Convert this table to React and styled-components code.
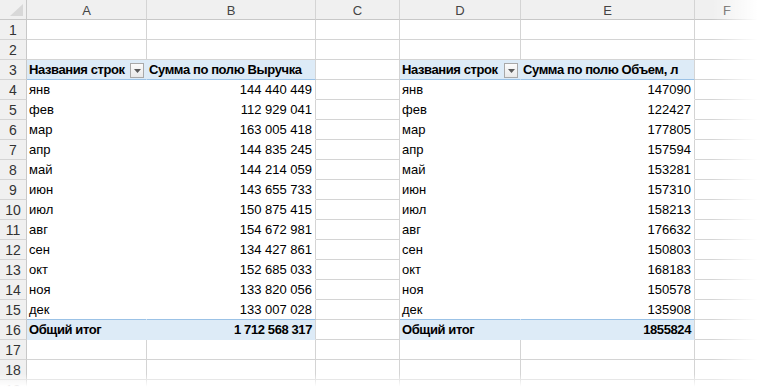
import React from 'react';
import styled, { createGlobalStyle } from 'styled-components';

const GlobalStyle = createGlobalStyle`
  html, body {
    margin: 0;
    padding: 0;
    background: #fff;
  }
  * {
    box-sizing: border-box;
  }
`;

const Frame = styled.div`
  position: relative;
  width: 760px;
  height: 388px;
  overflow: hidden;
  background: #fff;
  font-family: "Liberation Sans", Arial, sans-serif;
  font-size: 13px;
  color: #000;
`;

const Sheet = styled.div`
  display: grid;
  grid-template-columns: 27px 120px 169px 84px 121px 174px 1fr;
  grid-auto-rows: 20px;
`;

const Corner = styled.div`
  background: #f0f0f0;
  border-right: 1px solid #c8c8c8;
  border-bottom: 1px solid #c8c8c8;
  display: flex;
  align-items: flex-end;
  justify-content: flex-end;
  padding: 0 3px 3px 0;
`;

const ColHead = styled.div`
  background: #f0f0f0;
  border-right: 1px solid #d4d4d4;
  border-bottom: 1px solid #c8c8c8;
  color: #444;
  font-size: 13px;
  display: flex;
  align-items: center;
  justify-content: center;
  padding-top: 1px;
`;

const RowHead = styled.div`
  background: #f0f0f0;
  border-right: 1px solid #c8c8c8;
  border-bottom: 1px solid #d4d4d4;
  color: #333;
  font-size: 14px;
  display: flex;
  align-items: center;
  justify-content: center;
  padding-top: 1px;
`;

const tones = {
  grid: { bg: '#fff', right: '#d4d4d4', bottom: '#d4d4d4' },
  head: { bg: '#ddebf7', right: '#ddebf7', bottom: '#9bc2e6' },
  body: { bg: '#fff', right: '#fff', bottom: '#fff' },
  bodyLast: { bg: '#fff', right: '#fff', bottom: '#9bc2e6' },
  total: { bg: '#ddebf7', right: '#ddebf7', bottom: '#ddebf7' },
};

const Cell = styled.div`
  background: ${(p) => tones[p.$tone].bg};
  border-right: 1px solid ${(p) => (p.$edge ? '#d4d4d4' : tones[p.$tone].right)};
  border-bottom: 1px solid ${(p) => tones[p.$tone].bottom};
  font-weight: ${(p) => (p.$bold ? 700 : 400)};
  letter-spacing: ${(p) => (p.$bold ? '-0.4px' : '0')};
  display: flex;
  align-items: flex-end;
  justify-content: ${(p) => (p.$right ? 'flex-end' : 'space-between')};
  padding: 0 3px 2px 2px;
  white-space: nowrap;
  overflow: visible;
`;

const FilterButton = styled.span`
  width: 14px;
  height: 15px;
  margin: 0 -1px -1px 0;
  border: 1px solid #a8a8a8;
  background: linear-gradient(#fbfbfb, #e9e9e9);
  display: flex;
  align-items: center;
  justify-content: center;
  flex: none;
`;

const FadeRight = styled.div`
  position: absolute;
  top: 0;
  right: 0;
  width: 48px;
  height: 100%;
  background: linear-gradient(to right, rgba(255,255,255,0), #fff 95%);
  pointer-events: none;
`;

const FadeBottom = styled.div`
  position: absolute;
  left: 0;
  bottom: 0;
  width: 100%;
  height: 14px;
  background: linear-gradient(to bottom, rgba(255,255,255,0), #fff 90%);
  pointer-events: none;
`;

const months = ['янв', 'фев', 'мар', 'апр', 'май', 'июн', 'июл', 'авг', 'сен', 'окт', 'ноя', 'дек'];

const revenue = [
  '144 440 449', '112 929 041', '163 005 418', '144 835 245', '144 214 059', '143 655 733',
  '150 875 415', '154 672 981', '134 427 861', '152 685 033', '133 820 056', '133 007 028',
];

const volume = [
  '147090', '122427', '177805', '157594', '153281', '157310',
  '158213', '176632', '150803', '168183', '150578', '135908',
];

const pivots = [
  { title: 'Сумма по полю Выручка', values: revenue, total: '1 712 568 317' },
  { title: 'Сумма по полю Объем, л', values: volume, total: '1855824' },
];

const letters = ['A', 'B', 'C', 'D', 'E', 'F'];

const Arrow = () => (
  <svg width="7" height="4" viewBox="0 0 7 4">
    <path d="M0 0h7L3.5 4z" fill="#5a5a5a" />
  </svg>
);

const CornerMark = () => (
  <svg width="13" height="12" viewBox="0 0 13 12">
    <path d="M13 0V12H0z" fill="#d8d8d8" />
  </svg>
);

// two cells of one pivot table for a given sheet row
const pivotCells = (row, pivot, key) => {
  if (row === 3) {
    return [
      <Cell key={key + 'a'} $tone="head" $bold>
        Названия строк
        <FilterButton><Arrow /></FilterButton>
      </Cell>,
      <Cell key={key + 'b'} $tone="head" $bold $edge>{pivot.title}</Cell>,
    ];
  }
  if (row === 16) {
    return [
      <Cell key={key + 'a'} $tone="total" $bold>Общий итог</Cell>,
      <Cell key={key + 'b'} $tone="total" $bold $right $edge>{pivot.total}</Cell>,
    ];
  }
  const i = row - 4;
  const tone = row === 15 ? 'bodyLast' : 'body';
  return [
    <Cell key={key + 'a'} $tone={tone}>{months[i]}</Cell>,
    <Cell key={key + 'b'} $tone={tone} $right $edge>{pivot.values[i]}</Cell>,
  ];
};

const renderRow = (row) => {
  const inPivot = row >= 3 && row <= 16;
  const cells = [<RowHead key="h">{row}</RowHead>];
  if (inPivot) {
    cells.push(...pivotCells(row, pivots[0], 'l'));
    cells.push(<Cell key="c" $tone="grid" />);
    cells.push(...pivotCells(row, pivots[1], 'r'));
    cells.push(<Cell key="f" $tone="grid" />);
  } else {
    letters.forEach((l) => cells.push(<Cell key={l} $tone="grid" />));
  }
  return cells;
};

const rows = Array.from({ length: 19 }, (_, i) => i + 1);

export default function App() {
  return (
    <Frame>
      <GlobalStyle />
      <Sheet>
        <Corner><CornerMark /></Corner>
        {letters.map((l) => <ColHead key={l}>{l}</ColHead>)}
        {rows.map((r) => renderRow(r))}
      </Sheet>
      <FadeRight />
      <FadeBottom />
    </Frame>
  );
}
